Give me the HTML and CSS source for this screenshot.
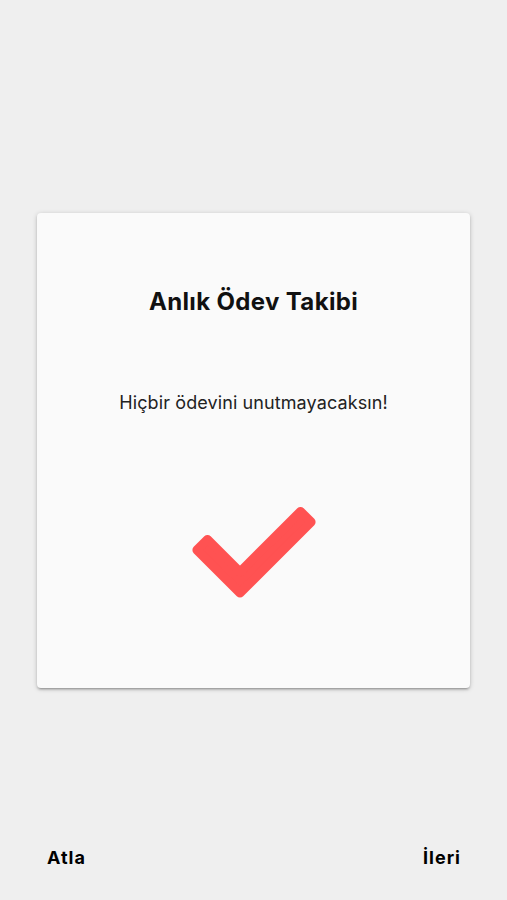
FILE: index.html
```html
<!DOCTYPE html>
<html lang="tr">
<head>
<meta charset="utf-8">
<title>Anlık Ödev Takibi</title>
<link rel="stylesheet" href="styles.css">
</head>
<body>
<div class="page">
  <main class="main">
    <section class="card">
      <h1 class="title">Anlık Ödev Takibi</h1>
      <p class="subtitle">Hiçbir ödevini unutmayacaksın!</p>
      <svg class="check" viewBox="188.5 502 130 100" aria-hidden="true">
        <polygon points="207,539.4 239.5,571.9 300,511.4 310.6,522 239.5,593.1 196.4,550" fill="#FF5252" stroke="#FF5252" stroke-width="9" stroke-linejoin="round"/>
      </svg>
    </section>
  </main>
  <footer class="footer">
    <span class="btn">Atla</span>
    <span class="btn">İleri</span>
  </footer>
</div>
</body>
</html>
```
FILE: styles.css
```css
html, body {
  margin: 0;
  padding: 0;
}
body {
  background: #efefef;
  font-family: Inter, "Noto Sans", sans-serif;
  color: #000;
}
.page {
  height: 900px;
  display: flex;
  flex-direction: column;
}
.main {
  flex: 1;
  display: flex;
  align-items: center;
  justify-content: center;
  padding-top: 84px;
}
.card {
  width: 433px;
  height: 475px;
  box-sizing: border-box;
  background: #fafafa;
  border-radius: 4px;
  box-shadow: 0 2px 2px rgba(0,0,0,0.14), 0 3px 1px -2px rgba(0,0,0,0.12), 0 1px 5px rgba(0,0,0,0.2);
  display: flex;
  flex-direction: column;
  align-items: center;
  padding-top: 74px;
}
.title {
  margin: 0;
  font-size: 24px;
  line-height: 30px;
  font-weight: 700;
  letter-spacing: 0.35px;
  color: #111;
}
.subtitle {
  margin: 75px 0 0;
  font-size: 18px;
  line-height: 22px;
  font-weight: 400;
  letter-spacing: 0.1px;
  color: #222;
}
.check {
  margin-top: 88px;
  width: 130px;
  height: 100px;
  display: block;
}
.footer {
  height: 84px;
  box-sizing: border-box;
  padding: 31px 46px 0 47px;
  display: flex;
  justify-content: space-between;
  align-items: flex-start;
}
.btn {
  font-size: 18px;
  line-height: 22px;
  font-weight: 700;
  letter-spacing: 1px;
  color: #000;
}
```
